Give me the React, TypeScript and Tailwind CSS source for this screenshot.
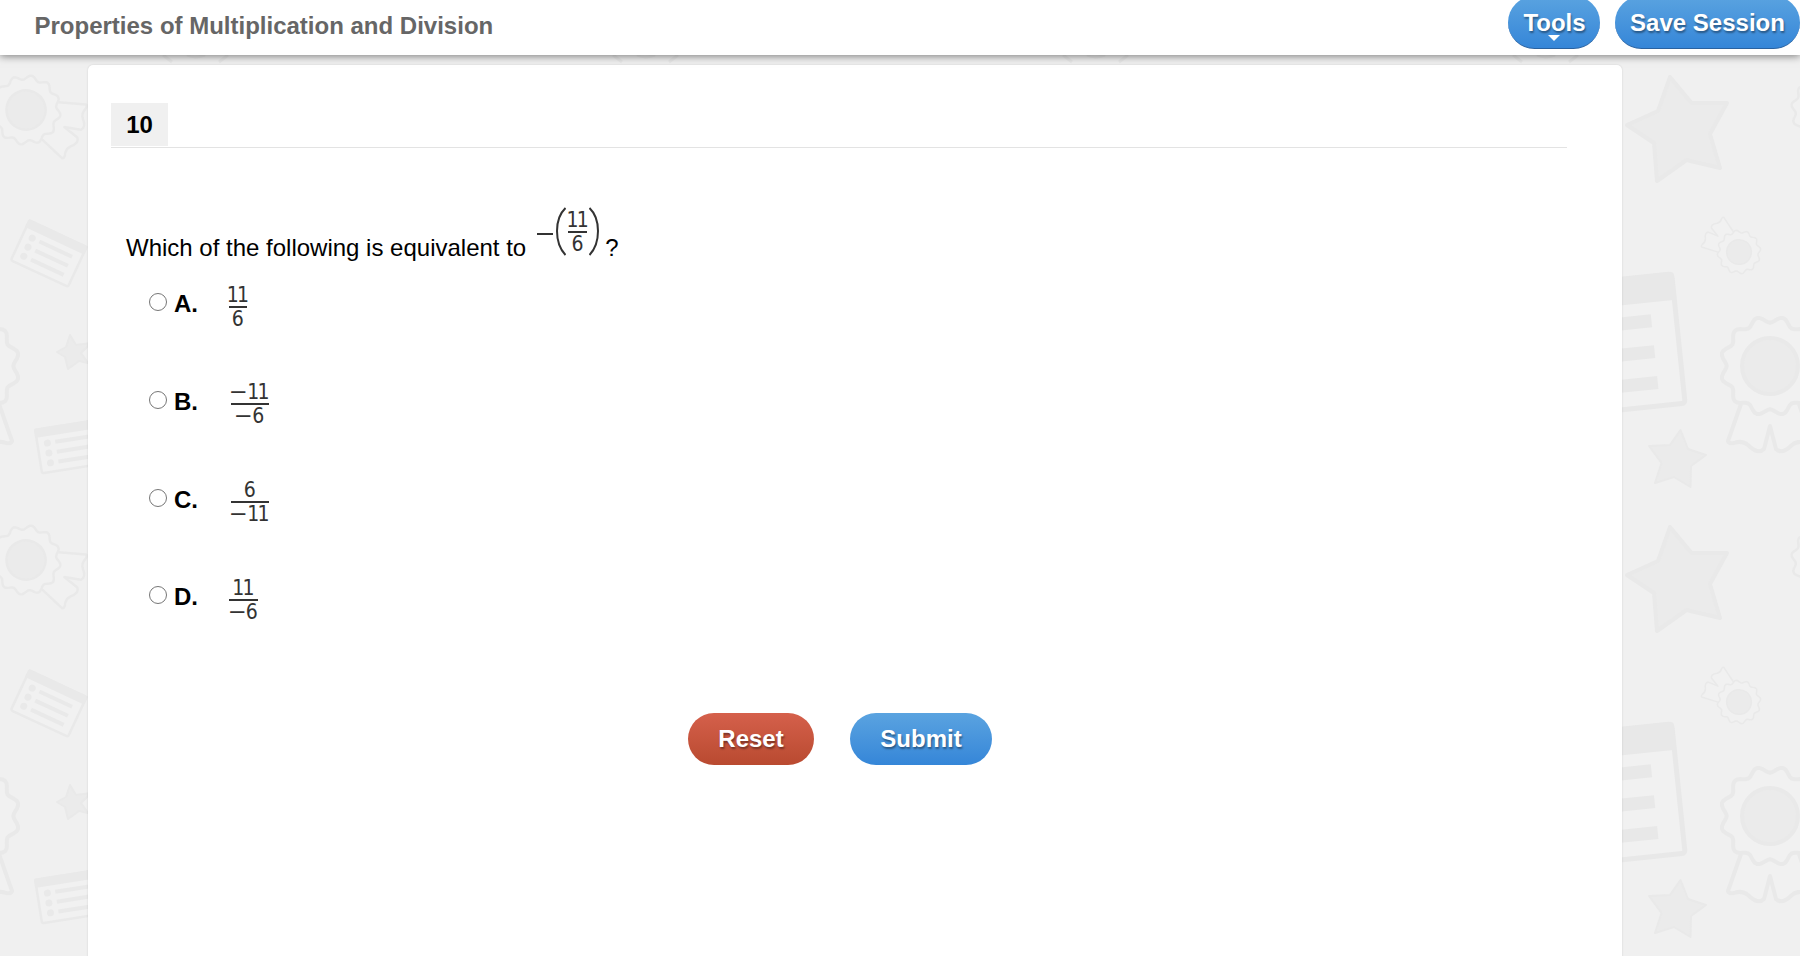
import { useState } from 'react';

const TILE = 450;
const COLS = [-1, 0, 1, 2, 3, 4];
const ROWS = [-1, 0, 1, 2];

function scallop(r: number, amp: number, lobes: number) {
  const pts: string[] = [];
  for (let d = 0; d < 360; d += 3) {
    const a = (d * Math.PI) / 180;
    const rad = r - amp * Math.cos(lobes * a);
    pts.push(`${(rad * Math.sin(a)).toFixed(1)},${(-rad * Math.cos(a)).toFixed(1)}`);
  }
  return pts.join(' ');
}

const BADGE = scallop(46.5, 3.2, 12);

function Badge({ transform, stroke }: { transform: string; stroke: number }) {
  return (
    <g transform={transform} fill="#f1f1f1" stroke="#e9e9e9" strokeWidth={stroke} strokeLinejoin="round">
      <path d="M-29 38L-42 75Q-41 78 -36 77Q-28 74 -22 79Q-12 89 -6 83L0 60L6 83Q12 89 22 79Q28 74 36 77Q41 78 42 75L29 38" />
      <polygon points={BADGE} />
      <circle r="28" fill="#ebebeb" />
    </g>
  );
}

function ListCard({ transform }: { transform: string }) {
  return (
    <g transform={transform} fill="#e9e9e9">
      <rect x="1" y="1" width="63" height="44" rx="2" fill="#f1f1f1" stroke="#e9e9e9" strokeWidth="2.5" />
      <rect width="65" height="9" rx="1" />
      {[16, 26, 36].map(y => (
        <g key={y}>
          <circle cx="11" cy={y} r="3.5" />
          <rect x="19" y={y - 2} width="36" height="4" />
        </g>
      ))}
    </g>
  );
}

function Backdrop() {
  return (
    <svg className="absolute inset-0 w-full h-full" aria-hidden="true">
      <defs>
        <g id="tile">
          <Badge transform="translate(420 366)" stroke={4} />
          <Badge transform="translate(26 110) rotate(-66) scale(.7)" stroke={3.5} />
          <Badge transform="translate(389 252) rotate(127) scale(.44)" stroke={3.5} />
          <g fill="#ebebeb" stroke="#e9e9e9" strokeWidth="4" strokeLinejoin="round">
            <path d="M320 77L341.500 103L377 103L360 134L370 168L336.500 160L307 181L304 143L277 125L308 111Z" />
            <path strokeWidth="2" d="M330.500 -20L338 -1L356 5L341 16L340.500 37L324 27L305 33L311.500 13L299 -4L320 -5Z" />
            <path strokeWidth="2" d="M70 335L76 345L91 343L81 353L88 363L79 361L68 369L65 357L57 352L66 347Z" />
          </g>
          <g transform="translate(321.500 272) rotate(-5.900)" fill="#e8e8e8">
            <rect x="-90" y="2" width="90" height="130" rx="3" fill="#f1f1f1" stroke="#e8e8e8" strokeWidth="5" />
            <rect x="-92" width="94" height="28" rx="3" />
            <rect x="-75" y="40" width="50" height="13" />
            <rect x="-75" y="71" width="50" height="13" />
            <rect x="-75" y="102" width="50" height="13" />
          </g>
          <ListCard transform="translate(29 219) rotate(25)" />
          <ListCard transform="translate(34 429) rotate(-9)" />
          <path d="M163 55L172 62M219 62L228 55M187 55Q195 59 205 55" fill="none" stroke="#e8e8e8" strokeWidth="3" />
        </g>
      </defs>
      {ROWS.map(r => COLS.map(c => <use key={`${r}:${c}`} href="#tile" x={c * TILE} y={r * TILE} />))}
    </svg>
  );
}

function Term({ value }: { value: string }) {
  const negative = value.startsWith('−');
  return (
    <span className="mr-0.5 flex">
      {negative && <span className="mr-[2px] inline-block w-[15px] origin-left scale-x-120 -indent-px">−</span>}
      <span>{negative ? value.slice(1) : value}</span>
    </span>
  );
}

function Fraction({ top, bottom, className = '' }: { top: string; bottom: string; className?: string }) {
  return (
    <span className={`inline-flex flex-col items-center font-['DejaVu_Sans_Condensed','DejaVu_Sans',sans-serif] [font-stretch:condensed] text-[21px] leading-[22px] tracking-[-1.7px] text-[#333] ${className}`}>
      <Term value={top} />
      <span className="h-0.5 w-full bg-[#333]" />
      <Term value={bottom} />
    </span>
  );
}

const choices = [
  { id: 'A', top: '11', bottom: '6', width: 'w-[18px] ml-[31px]' },
  { id: 'B', top: '−11', bottom: '−6', width: 'w-[38px] ml-[33px]' },
  { id: 'C', top: '6', bottom: '−11', width: 'w-[38px] ml-[33px]' },
  { id: 'D', top: '11', bottom: '−6', width: 'w-[29px] ml-[31px]' },
];

const pill = 'rounded-full font-bold text-white text-2xl cursor-pointer [text-shadow:1px_2px_2px_rgba(0,0,0,0.4)]';
const blue = 'bg-linear-to-b from-[#5aa3e0] to-[#3586d8]';

export default function App() {
  const [selected, setSelected] = useState<string | null>(null);

  return (
    <div className="relative h-[956px] w-[1800px] overflow-hidden bg-[#f0f0f0] font-['Liberation_Sans',Arial,sans-serif] text-black">
      <Backdrop />

      <header className="relative z-10 flex h-[55px] items-start justify-between bg-white shadow-[0_1px_8px_rgba(0,0,0,0.5)]">
        <h1 className="ml-[34.5px] mt-[8px] text-2xl leading-[36px] font-bold text-[#666]">Properties of Multiplication and Division</h1>
        <div className="flex gap-[15px]">
          <button className={`${pill} ${blue} relative -mt-1 h-[53px] w-[92px] border-b border-[#2a62a0] pt-0.5 pl-px`}>
            Tools
            <svg className="absolute left-[39px] top-[39px]" width="14" height="8"><path d="M1 0H13L7 6Z" fill="white" /></svg>
          </button>
          <button className={`${pill} ${blue} -mt-1 h-[53px] w-[185px] border-b border-[#2a62a0] pt-0.5`}>Save Session</button>
        </div>
      </header>

      <main className="relative ml-[88px] mt-[10px] h-[900px] w-[1534px] rounded-[5px] bg-white shadow-[0_0_2px_rgba(0,0,0,0.15)]">
        <div className="ml-[23px] flex w-[1456px] border-b border-[#e3e3e3] pt-[38px] pb-px">
          <div className="flex h-[43px] w-[57px] items-center justify-center bg-[#f0f0f0] text-2xl font-bold">10</div>
        </div>

        <p className="ml-[38px] mt-[51px] flex h-[68px] items-start text-2xl">
          <span className="mt-[31px] leading-[36px]">Which of the following is equivalent to</span>
          <span className="ml-[11px] mt-[8px] flex text-[#333]">
            <span className="mt-[26px] h-0.5 w-[16px] bg-[#333]" />
            <svg className="ml-[2px]" width="11" height="49" fill="none" stroke="#333" strokeWidth="2"><path d="M10.500 1Q2 9 2 24Q2 39 10.500 48" /></svg>
            <Fraction top="11" bottom="6" className="mx-[2px] mt-[2px] w-[19px]" />
            <svg width="11" height="49" fill="none" stroke="#333" strokeWidth="2"><path d="M.5 1Q9 9 9 24Q9 39 .5 48" /></svg>
          </span>
          <span className="ml-[5px] mt-[31px] leading-[36px]">?</span>
        </p>

        <ul className="ml-[61px] mt-[7px]">
          {choices.map(c => (
            <li key={c.id} className="flex h-[97.800px] items-start">
              <input
                type="radio"
                name="answer"
                checked={selected === c.id}
                onChange={() => setSelected(c.id)}
                className="mt-[19px] size-[18px] appearance-none rounded-full border border-[#767676] bg-white checked:border-[5px] checked:border-[#3586d8]"
              />
              <span className="ml-[7px] mt-[12px] w-[24px] text-2xl leading-[36px] font-bold">{c.id}.</span>
              <Fraction top={c.top} bottom={c.bottom} className={`mt-[9.500px] ${c.width}`} />
            </li>
          ))}
        </ul>

        <div className="ml-[600px] mt-[48px] flex gap-[36px]">
          <button
            onClick={() => setSelected(null)}
            className={`${pill} h-[52px] w-[126px] bg-linear-to-b from-[#d5604b] to-[#b94a30]`}
          >
            Reset
          </button>
          <button className={`${pill} ${blue} h-[52px] w-[142px]`}>Submit</button>
        </div>
      </main>
    </div>
  );
}
